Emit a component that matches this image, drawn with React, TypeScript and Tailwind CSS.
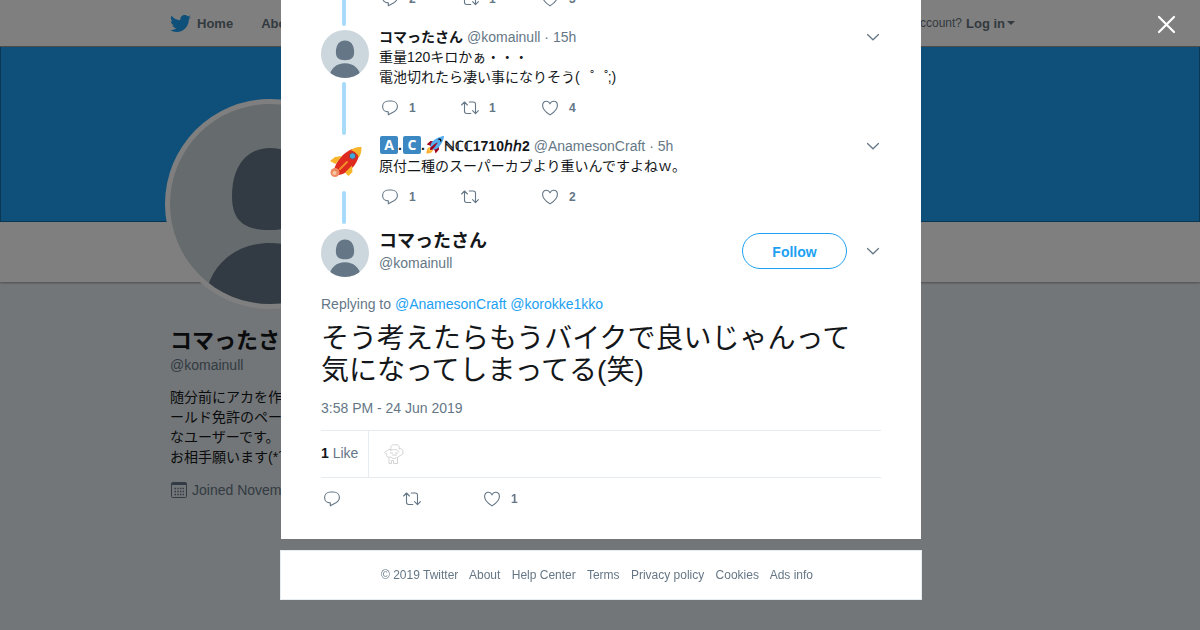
import React from "react";
import { FaTwitter } from "react-icons/fa";

function Avatar({ className }: { className: string }) {
  return (
    <svg viewBox="0 0 200 200" className={className + " rounded-full bg-[#ccd6dd]"} role="img" aria-label="コマったさん">
      <g fill="#657786">
        <path d="M100 44C123 44 138 62 138 92C138 116 127 126 100 126C73 126 62 116 62 92C62 62 77 44 100 44Z" />
        <path d="M34 200C38 160 66 139 100 139C134 139 162 160 166 200Z" />
      </g>
    </svg>
  );
}

function Rocket({ className }: { className: string }) {
  return (
    <svg viewBox="0 0 36 36" className={className} role="img" aria-label="Rocket">
      <path fill="#a0041e" d="M1 17l8-7 16 1 1 16-7 8s.001-5.999-6-12-12-6-12-6z" />
      <path fill="#ffac33" d="M.973 35s-.036-7.979 2.985-11S15 21.187 15 21.187 14.999 29 11.999 32c-3 3-11.026 3-11.026 3z" />
      <circle fill="#ffcc4d" cx="8.999" cy="27" r="4" />
      <path fill="#55acee" d="M35.999 0s-10 0-22 10c-6 5-6 14-4 16s11 2 16-4c10-12 10-22 10-22z" />
      <path d="M26.999 5c-1.623 0-3.013.971-3.641 2.36.502-.227 1.055-.36 1.641-.36 2.209 0 4 1.791 4 4 0 .586-.133 1.139-.359 1.640 1.389-.627 2.359-2.017 2.359-3.640 0-2.209-1.791-4-4-4z" />
      <path fill="#a0041e" d="M8 28s0-4 1-5 13.001-10.999 14-10-9.001 13-10.001 14S8 28 8 28z" />
    </svg>
  );
}

function RedRocket() {
  return (
    <svg viewBox="0 0 48 48" className="h-12 w-12" role="img" aria-label="AnamesonCraft">
      <path fill="#df2a20" d="M31 10C22 14 15 22 13 31L18 36C28 34 35 27 38 17C37 14 34 11 31 10Z" />
      <path fill="#f7b52c" d="M29.500 11C33 8.500 37 8 40.500 8C40.500 12 40 15 38 18.500C36 14 33 12 29.500 11Z M9 22L14 18L21 17L14.500 25Z M24 33.500L31 26.500L31.500 33L27.500 37Z" />
      <circle cx="31.500" cy="17" r="3.200" fill="#3ba9dc" stroke="#9b3a42" />
      <path d="M19 30L26 23" stroke="#f28c28" strokeWidth="2" strokeLinecap="round" />
      <circle cx="14" cy="33.500" r="4.500" fill="#ee8a63" />
      <circle cx="13.500" cy="34" r="2" fill="#f8c9a5" />
    </svg>
  );
}

function LetterTile({ children }: { children: string }) {
  return (
    <span className="ml-px inline-flex h-[18px] w-[18px] items-center justify-center rounded-[2px] bg-[#3b88c3] font-['Open_Sans',sans-serif] text-sm leading-4 font-bold text-white">
      {children}
    </span>
  );
}

const iconBase = "h-[18px] w-[18px] shrink-0";

function ReplyIcon() {
  return (
    <svg viewBox="0 0 18 18" className={iconBase} fill="none" stroke="#657786" strokeWidth="1.100" strokeLinejoin="round">
      <path d="M7.500 2H10.500C14 2 16.400 4.300 16.400 7.500C16.400 10 15 11.500 12.500 13L7.300 15.800V12.900C3.800 12.900 1.600 10.600 1.600 7.500C1.600 4.300 4 2 7.500 2Z" />
    </svg>
  );
}

function RetweetIcon() {
  return (
    <svg viewBox="0 0 18 18" className={iconBase} fill="none" stroke="#657786" strokeWidth="1.100" strokeLinecap="round" strokeLinejoin="round">
      <path d="M.6 6L3.500 3L6.400 6M3.500 3.200V12.300C3.500 13.800 4.200 14.500 5.700 14.500H9.800" />
      <path d="M17.400 11.600L14.500 14.600L11.600 11.600M14.500 14.400V5.200C14.500 3.700 13.800 3 12.300 3H8.200" />
    </svg>
  );
}

function HeartIcon() {
  return (
    <svg viewBox="0 0 18 18" className={iconBase} fill="none" stroke="#657786" strokeWidth="1.100" strokeLinejoin="round">
      <path d="M9 15.900C5.500 13.600 1.600 10.200 1.600 6.400C1.600 4 3.200 2.300 5.300 2.300C7 2.300 8.300 3.300 9 4.900C9.700 3.300 11 2.300 12.700 2.300C14.800 2.300 16.400 4 16.400 6.400C16.400 10.200 12.500 13.600 9 15.900Z" />
    </svg>
  );
}

function Caret() {
  return (
    <button aria-label="More" className="flex h-5 w-4 items-center justify-center">
      <svg viewBox="0 0 14 8" className="h-2 w-[14px]" fill="none" stroke="#657786" strokeWidth="1.200" strokeLinecap="round">
        <path d="M1.500 1.500L7 6.800L12.500 1.500" />
      </svg>
    </button>
  );
}

type Counts = { replies?: number; retweets?: number; likes?: number };

function Actions({ replies, retweets, likes }: Counts) {
  const items = [
    { label: "Reply", icon: <ReplyIcon />, count: replies },
    { label: "Retweet", icon: <RetweetIcon />, count: retweets },
    { label: "Like", icon: <HeartIcon />, count: likes },
  ];
  return (
    <div className="mt-[11px] flex h-5">
      {items.map((item) => (
        <button key={item.label} aria-label={item.label} className="flex w-20 items-center gap-[10px] pl-[2px] text-xs font-bold text-[#657786]">
          {item.icon}
          {item.count !== undefined && <span>{item.count}</span>}
        </button>
      ))}
    </div>
  );
}

type TweetProps = Counts & {
  avatar: React.ReactNode;
  name: React.ReactNode;
  handle: string;
  age: string;
  children: React.ReactNode;
};

function Tweet({ avatar, name, handle, age, children, ...counts }: TweetProps) {
  return (
    <article className="flex gap-[10px]">
      <div className="flex w-12 shrink-0 flex-col items-center gap-1 pt-[3px] pb-px">
        {avatar}
        <div className="mr-[2px] w-1 flex-1 rounded-sm bg-[#a8dbfa]" />
      </div>
      <div className="min-w-0 flex-1 pb-[18px]">
        <header className="flex justify-between">
          <div className="flex h-5 items-center gap-1 text-[#657786]">
            <b className="flex items-center text-[#14171a]">{name}</b>
            <span>{handle}</span>
            <span>· {age}</span>
          </div>
          <Caret />
        </header>
        <p>{children}</p>
        <Actions {...counts} />
      </div>
    </article>
  );
}

function Profile() {
  return (
    <div className="min-h-screen">
      <header className="h-[47px] border-b border-black/40 bg-white">
        <div className="mx-auto flex h-[46px] max-w-[860px] items-center pt-px text-[13px] font-bold text-[#66757f]">
          <a href="#home" className="flex items-center gap-[6px]">
            <FaTwitter className="h-[21px] w-[21px] text-[#1da1f2]" />
            Home
          </a>
          <a href="#about" className="ml-7">About</a>
          <div className="ml-auto flex items-center gap-1 pr-[15px] text-xs font-normal">
            <span>Have an account?</span>
            <button className="flex items-center gap-[2px] text-[13px] font-bold">
              Log in
              <svg viewBox="0 0 8 4" className="h-1 w-2" fill="currentColor"><path d="M0 0H8L4 4Z" /></svg>
            </button>
          </div>
        </div>
      </header>
      <div className="h-[175px] border border-t-0 border-black/30 bg-[#1da1f2]" />
      <div className="h-[60px] bg-white shadow-[0_1px_2px_rgba(0,0,0,0.35)]" />
      <main className="mx-auto max-w-[860px]">
        <div className="relative -mt-[183px] -ml-[5px] h-[210px] w-[210px] rounded-full bg-white p-[5px]">
          <Avatar className="h-[200px] w-[200px]" />
        </div>
        <h1 className="mt-[18px] text-[22px] leading-7 font-bold">コマったさん</h1>
        <p className="text-[#657786]">@komainull</p>
        <p className="mt-3 w-60 whitespace-nowrap">
          随分前にアカを作
          <br />
          ールド免許のペー
          <br />
          なユーザーです。
          <br />
          お相手願います(*´
        </p>
        <p className="mt-[13px] flex items-center gap-1 text-[#657786]">
          <svg viewBox="0 0 18 18" className="h-[18px] w-[18px]" fill="none" stroke="currentColor">
            <rect x="1.500" y="1.500" width="15" height="15" rx="1" />
            <path d="M1.500 3H16.500" strokeWidth="2" />
            <path d="M4.500 7.500H14M4.500 10.500H14M4.500 13.500H14" strokeWidth="1.500" strokeDasharray="1.500 1.200" />
          </svg>
          Joined November
        </p>
      </main>
    </div>
  );
}

const footerLinks = ["About", "Help Center", "Terms", "Privacy policy", "Cookies", "Ads info"];

export default function App() {
  return (
    <div lang="ja" className="relative h-screen overflow-hidden bg-[#e6ecf0] font-['Liberation_Sans','Noto_Sans_CJK_JP',sans-serif] text-sm leading-5 text-[#14171a]">
      <Profile />
      <div className="fixed inset-0 overflow-hidden bg-black/50 pl-[2px]">
        <section role="dialog" aria-label="Conversation" className="mx-auto -mt-[22px] max-w-[640px] bg-white px-10 pb-[30px]">
          <div className="flex gap-[10px]">
            <div className="mb-px flex w-12 justify-center">
              <div className="mr-[2px] w-1 rounded-sm bg-[#a8dbfa]" />
            </div>
            <div className="pb-[18px]">
              <Actions replies={2} retweets={1} likes={3} />
            </div>
          </div>
          <Tweet avatar={<Avatar className="h-12 w-12" />} name="コマったさん" handle="@komainull" age="15h" replies={1} retweets={1} likes={4}>
            重量120キロかぁ・・・
            <br />
            {"電池切れたら凄い事になりそう(\u3000\u309a\u3000\u309a;)"}
          </Tweet>
          <Tweet
            avatar={<RedRocket />}
            name={
              <>
                <span className="flex items-center pb-[2px]">
                  <LetterTile>A</LetterTile>.<LetterTile>C</LetterTile>.
                  <Rocket className="ml-px h-[18px] w-[18px]" />
                </span>
                <span>ℕℂℂ1710𝘩𝘩2</span>
              </>
            }
            handle="@AnamesonCraft"
            age="5h"
            replies={1}
            likes={2}
          >
            原付二種のスーパーカブより重いんですよねｗ。
          </Tweet>
          <article>
            <header className="flex gap-[10px] pt-1">
              <Avatar className="h-12 w-12" />
              <div className="flex-1">
                <h2 className="text-lg leading-6 font-bold">コマったさん</h2>
                <p className="text-[#657786]">@komainull</p>
              </div>
              <div className="mt-1 flex h-9 items-center gap-[18px]">
                <button className="h-9 w-[105px] rounded-full border border-[#1da1f2] pt-[2px] font-bold text-[#1da1f2]">Follow</button>
                <Caret />
              </div>
            </header>
            <p className="mt-[17px] text-[#657786]">
              Replying to <a href="#anamesoncraft" className="text-[#1da1f2]">@AnamesonCraft</a>{" "}
              <a href="#korokke1kko" className="text-[#1da1f2]">@korokke1kko</a>
            </p>
            <p className="mt-[9px] pr-4 text-[28px] leading-8">そう考えたらもうバイクで良いじゃんって気になってしまってる(笑)</p>
            <p className="mt-[11px] text-[#657786]">3:58 PM - 24 Jun 2019</p>
            <div className="mt-3 flex h-12 items-stretch border-y border-[#e6ecf0]">
              <div className="flex items-center border-r border-[#e6ecf0] pr-[10px] pb-[2px] text-[#657786]">
                <span><b className="text-[#14171a]">1</b> Like</span>
              </div>
              <svg viewBox="0 0 24 24" className="mt-[11px] ml-[13px] h-6 w-6" fill="none" stroke="#cfcfcf" strokeWidth=".9" role="img" aria-label="Liked by">
                <path d="M9 8C8 4 11 1.500 13 3C16 2 18 4 17 7C20 6 22 8 20 10C22 10 22 12 19 13L16 15C14 17 10 17 9 15C6 16 3 14 5 12C2 12 2 9 5 9C6 7 8 7 9 8Z" />
                <path d="M8 9C10 7 16 7 17 10M8 11H11M13 11H16M10 13H15M7 15.500V21.500H9.500V18.500H11.500V21.500H15.500V15.500" />
              </svg>
            </div>
            <Actions likes={1} />
          </article>
        </section>
        <footer className="mx-auto mt-[11px] h-[50px] max-w-[642px] border border-[#e6ecf0] bg-white pt-[14px] text-center text-xs leading-5 text-[#657786]">
          <span className="mr-2">© 2019 Twitter</span>{" "}
          {footerLinks.map((link) => (
            <React.Fragment key={link}>
              <a href={"#" + link.toLowerCase().replace(" ", "-")} className="mr-2">
                {link}
              </a>{" "}
            </React.Fragment>
          ))}
        </footer>
        <button aria-label="Close" className="absolute top-3 right-[22px] flex h-6 w-6 items-center justify-center">
          <svg viewBox="0 0 20 20" className="h-5 w-5" fill="none" stroke="white" strokeWidth="2.200" strokeLinecap="round">
            <path d="M3 3L18 18M18 3L3 18" />
          </svg>
        </button>
      </div>
    </div>
  );
}
